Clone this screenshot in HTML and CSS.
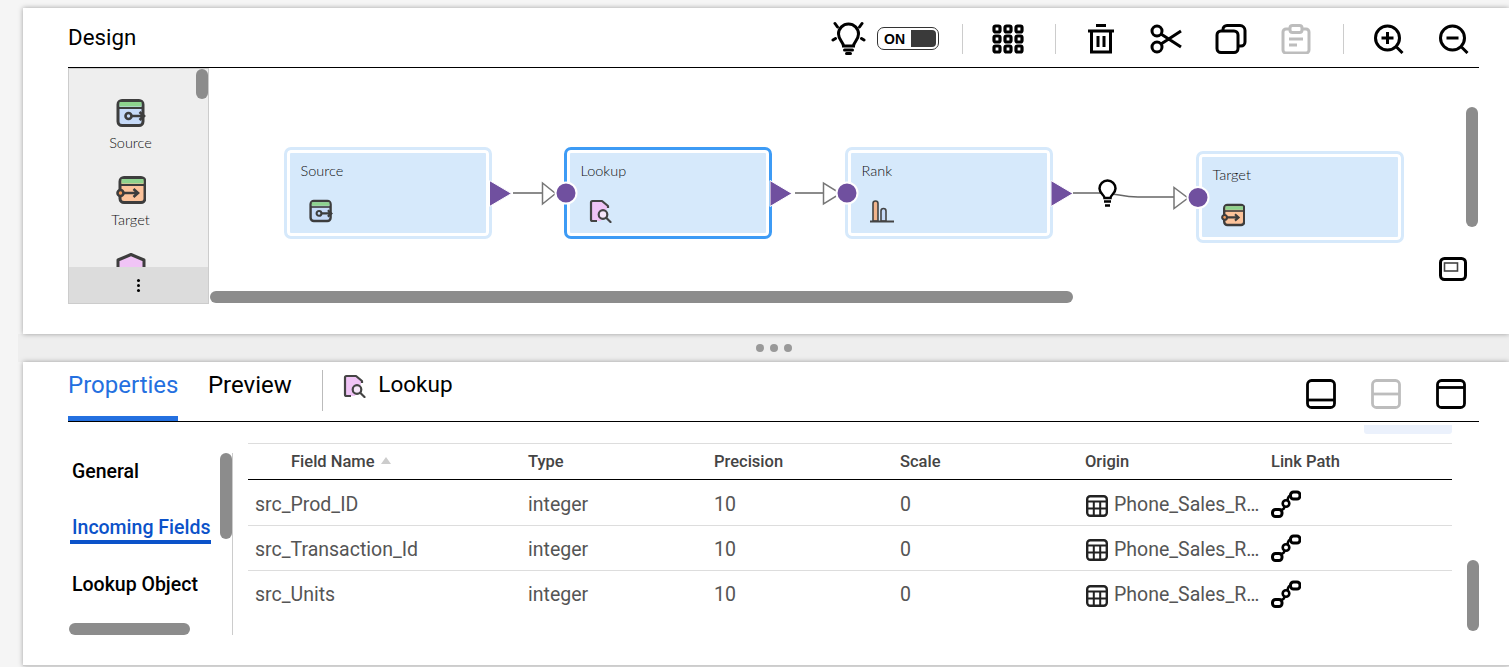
FILE: index.html
```html
<!DOCTYPE html>
<html lang="en">
<head>
    <meta charset="UTF-8">
    <meta name="viewport" content="width=device-width, initial-scale=1.0">
    <title>Design</title>
    <link rel="stylesheet" href="styles.css">
</head>
<body>
    <svg class="icon-defs" width="0" height="0" aria-hidden="true">
        <symbol id="i-source" viewBox="0 0 30 28">
            <rect x="2" y="1.500" width="25" height="25" rx="4" fill="#c6daf8" stroke="#3d3d3d" stroke-width="3"/>
            <rect x="3.500" y="3" width="22" height="4.500" fill="#8ed38e"/>
            <path d="M2 9h25" stroke="#3d3d3d" stroke-width="2"/>
            <circle cx="12.500" cy="17" r="3" fill="#c6daf8" stroke="#3d3d3d" stroke-width="2.600"/>
            <path d="M15.500 17H27M23.500 13l4.500 4-4.500 4" fill="none" stroke="#3d3d3d" stroke-width="2.600"/>
        </symbol>
        <symbol id="i-target" viewBox="0 0 30 28">
            <rect x="4" y="1.500" width="25" height="25" rx="4" fill="#fcc39b" stroke="#3d3d3d" stroke-width="3"/>
            <rect x="5.500" y="3" width="22" height="4.500" fill="#8ed38e"/>
            <path d="M4 9h25" stroke="#3d3d3d" stroke-width="2"/>
            <circle cx="4.500" cy="17" r="3" fill="#f59a58" stroke="#3d3d3d" stroke-width="2.600"/>
            <path d="M7.500 17H21M17.500 13l4.500 4-4.500 4" fill="none" stroke="#3d3d3d" stroke-width="2.600"/>
        </symbol>
        <symbol id="i-lookup" viewBox="0 0 24 24">
            <path d="M12 22H3.500a1.500 1.500 0 0 1-1.500-1.500v-17A1.500 1.500 0 0 1 3.500 2H12l6 5v3" fill="#f0c4f6"/>
            <path d="M8 22H3.500a1.500 1.500 0 0 1-1.500-1.500v-17A1.500 1.500 0 0 1 3.500 2H13l6 5v2" fill="none" stroke="#444" stroke-width="2.200" stroke-linejoin="round"/>
            <circle cx="14" cy="15.500" r="4.300" fill="#f6e6fa" stroke="#444" stroke-width="2.200"/>
            <path d="M17.200 18.800l4.300 4.200" stroke="#444" stroke-width="2.200" stroke-linecap="round"/>
        </symbol>
        <symbol id="i-rank" viewBox="0 0 24 24">
            <path d="M3 22V4.500a2.500 2.500 0 0 1 5 0V22z" fill="#f2b48c" stroke="#444" stroke-width="1.600"/>
            <path d="M11 22V12a2.500 2.500 0 0 1 5 0v10z" fill="#c6daf8" stroke="#444" stroke-width="1.600"/>
            <path d="M0 22.500h24" stroke="#444" stroke-width="2"/>
        </symbol>
        <symbol id="i-table" viewBox="0 0 22 22">
            <rect x="1.200" y="1.200" width="19.600" height="19.600" rx="3" fill="none" stroke="#222" stroke-width="2.400"/>
            <path d="M1 6.500h20M1 13.500h20M7.800 6.500V21M14.200 6.500V21" stroke="#222" stroke-width="2"/>
        </symbol>
        <symbol id="i-link" viewBox="0 0 30 28">
            <rect x="1.500" y="19.500" width="9.500" height="7" rx="3" fill="none" stroke="#000" stroke-width="3"/>
            <circle cx="15" cy="13.500" r="3.300" fill="none" stroke="#000" stroke-width="2.600"/>
            <rect x="19.500" y="2" width="9.500" height="7" rx="3" fill="none" stroke="#000" stroke-width="3"/>
            <path d="M9 20c3.500-.5 4-1 4.500-3.500M16.500 10.500C17 6.500 18 5.500 20.500 5" fill="none" stroke="#000" stroke-width="2.600"/>
        </symbol>
    </svg>

    <div class="page">
        <section class="panel design-panel">
            <header class="design-head">
                <h1 class="design-title">Design</h1>
                <div class="toolbar">
                    <div class="tool-group bulb-group">
                        <svg class="tool-icon bulb-icon" viewBox="0 0 34 34" fill="none" stroke="#000" stroke-width="3" stroke-linecap="round">
                            <path d="M12 25c0-4-5-6-5-12a10 10 0 0 1 20 0c0 6-5 8-5 12z"/>
                            <path d="M13 29h8M15 32.500h4" stroke-width="3"/>
                            <path d="M3.500 2.500l2.500 3.500M30.500 2.500L28 6M1.500 19l2.500-1.500M32.500 19L30 17.500"/>
                        </svg>
                        <div class="toggle"><span class="toggle-label">ON</span><span class="toggle-knob"></span></div>
                    </div>
                    <span class="tool-sep"></span>
                    <svg class="tool-icon" viewBox="0 0 32 30" fill="none" stroke="#000" stroke-width="3.200">
                        <rect x="2" y="2" width="6" height="6" rx="1.500"/><rect x="13" y="2" width="6" height="6" rx="1.500"/><rect x="24" y="2" width="6" height="6" rx="1.500"/>
                        <rect x="2" y="12" width="6" height="6" rx="1.500"/><rect x="13" y="12" width="6" height="6" rx="1.500"/><rect x="24" y="12" width="6" height="6" rx="1.500"/>
                        <rect x="2" y="22" width="6" height="6" rx="1.500"/><rect x="13" y="22" width="6" height="6" rx="1.500"/><rect x="24" y="22" width="6" height="6" rx="1.500"/>
                    </svg>
                    <span class="tool-sep"></span>
                    <svg class="tool-icon" viewBox="0 0 32 30" fill="none" stroke="#000" stroke-width="3">
                        <path d="M3 7h26M11 1.500h10M6.500 7v21h19V7M13 12v11M19 12v11"/>
                    </svg>
                    <svg class="tool-icon" viewBox="0 0 32 30" fill="none" stroke="#000" stroke-width="3">
                        <circle cx="7" cy="7" r="5"/><circle cx="7" cy="23" r="5"/>
                        <path d="M11 10l20 13M11 20L31 7"/>
                    </svg>
                    <svg class="tool-icon" viewBox="0 0 32 30" fill="none" stroke="#000" stroke-width="3">
                        <rect x="2" y="7" width="21" height="21.500" rx="4"/>
                        <path d="M8 7V5.500a4 4 0 0 1 4-4h13a5 5 0 0 1 5 5V18a4 4 0 0 1-4 4h-3"/>
                    </svg>
                    <svg class="tool-icon" viewBox="0 0 32 30" fill="none" stroke="#bdbdbd" stroke-width="3">
                        <path d="M10 5H6a3 3 0 0 0-3 3v18a3 3 0 0 0 3 3h20a3 3 0 0 0 3-3V8a3 3 0 0 0-3-3h-4"/>
                        <rect x="10" y="1.500" width="12" height="7" rx="2.500"/>
                        <path d="M9 15h14M9 21h8"/>
                    </svg>
                    <span class="tool-sep"></span>
                    <svg class="tool-icon" viewBox="0 0 32 30" fill="none" stroke="#000" stroke-width="3">
                        <circle cx="14.500" cy="14" r="12"/>
                        <path d="M14.500 8v12M8.500 14h12M23.500 23l6 6"/>
                    </svg>
                    <svg class="tool-icon" viewBox="0 0 32 30" fill="none" stroke="#000" stroke-width="3">
                        <circle cx="14.500" cy="14" r="12"/>
                        <path d="M8.500 14h12M23.500 23l6 6"/>
                    </svg>
                </div>
            </header>

            <div class="design-body">
                <aside class="palette">
                    <div class="palette-item">
                        <svg class="palette-icon"><use href="#i-source"/></svg>
                        <span class="palette-label">Source</span>
                    </div>
                    <div class="palette-item">
                        <svg class="palette-icon"><use href="#i-target"/></svg>
                        <span class="palette-label">Target</span>
                    </div>
                    <div class="palette-item">
                        <svg class="palette-icon" viewBox="0 0 30 28">
                            <path d="M15 1.500L28 7v19H2V7z" fill="#f0c4f6" stroke="#3d3d3d" stroke-width="3" stroke-linejoin="round"/>
                        </svg>
                    </div>
                    <div class="palette-more"><span class="kebab"></span></div>
                    <span class="scrollbar palette-scroll"></span>
                </aside>

                <div class="canvas">
                    <div class="node node-source">
                        <span class="node-name">Source</span>
                        <svg class="node-icon"><use href="#i-source"/></svg>
                    </div>
                    <div class="node node-lookup selected">
                        <span class="node-name">Lookup</span>
                        <svg class="node-icon"><use href="#i-lookup"/></svg>
                    </div>
                    <div class="node node-rank">
                        <span class="node-name">Rank</span>
                        <svg class="node-icon"><use href="#i-rank"/></svg>
                    </div>
                    <div class="node node-target">
                        <span class="node-name">Target</span>
                        <svg class="node-icon"><use href="#i-target"/></svg>
                    </div>

                    <svg class="links" viewBox="209 68 1270 236">
                        <g class="link-line">
                            <path d="M513 193h29M795 193h28M1073 193h25c20 0 22 4 40 4h36"/>
                            <path class="link-head" d="M542.500 183v21l13-10.500z"/>
                            <path class="link-head" d="M823.500 183v21l17-10.500z"/>
                            <path class="link-head" d="M1174 187.500v21l14-10.500z"/>
                        </g>
                        <g class="port-out">
                            <path d="M489.500 180.500l22 13-22 13z"/>
                            <path d="M770 180.500l22 13-22 13z"/>
                            <path d="M1051 180.500l22 13-22 13z"/>
                        </g>
                        <g class="port-in">
                            <circle cx="566" cy="193" r="10.500"/>
                            <circle cx="847" cy="193" r="10.500"/>
                            <circle cx="1198" cy="197.500" r="10.500"/>
                        </g>
                        <g class="link-bulb">
                            <path d="M1104.500 198c0-3-5-4.500-5-9.500a8 8 0 0 1 16 0c0 5-5 6.500-5 9.500z"/>
                            <path d="M1104 201.500h7M1105 205.500h5" stroke-width="2.600"/>
                        </g>
                    </svg>

                    <svg class="fit-icon" viewBox="0 0 28 24" fill="none" stroke="#000">
                        <rect x="1.500" y="1.500" width="25" height="21" rx="4" stroke-width="3"/>
                        <rect x="5.500" y="6" width="13" height="8" stroke-width="1.600" stroke="#444"/>
                    </svg>
                    <span class="scrollbar canvas-hscroll"></span>
                    <span class="scrollbar canvas-vscroll"></span>
                </div>
            </div>
        </section>

        <div class="splitter"><span></span><span></span><span></span></div>

        <section class="panel props-panel">
            <header class="props-head">
                <nav class="tabs">
                    <a class="tab active">Properties</a>
                    <a class="tab">Preview</a>
                </nav>
                <span class="tabs-sep"></span>
                <div class="selected-name">
                    <svg class="selected-icon"><use href="#i-lookup"/></svg>
                    <span>Lookup</span>
                </div>
                <div class="layout-btns">
                    <svg class="layout-icon" viewBox="0 0 30 30" fill="none" stroke="#000" stroke-width="2.800">
                        <rect x="1.500" y="1.500" width="27" height="27" rx="4"/><path d="M1.500 21h27"/>
                    </svg>
                    <svg class="layout-icon" viewBox="0 0 30 30" fill="none" stroke="#bdbdbd" stroke-width="2.800">
                        <rect x="1.500" y="1.500" width="27" height="27" rx="4"/><path d="M1.500 15h27"/>
                    </svg>
                    <svg class="layout-icon" viewBox="0 0 30 30" fill="none" stroke="#000" stroke-width="2.800">
                        <rect x="1.500" y="1.500" width="27" height="27" rx="4"/><path d="M1.500 8.500h27"/>
                    </svg>
                </div>
            </header>

            <div class="props-body">
                <aside class="side">
                    <ul class="side-list">
                        <li class="side-item">General</li>
                        <li class="side-item active">Incoming Fields</li>
                        <li class="side-item">Lookup Object</li>
                    </ul>
                    <span class="scrollbar side-vscroll"></span>
                    <span class="scrollbar side-hscroll"></span>
                </aside>

                <div class="fields">
                    <span class="fields-flag"></span>
                    <table class="fields-table">
                        <thead>
                            <tr>
                                <th class="col-name"><span class="sort-asc">Field Name</span></th>
                                <th class="col-type">Type</th>
                                <th class="col-prec">Precision</th>
                                <th class="col-scale">Scale</th>
                                <th class="col-origin">Origin</th>
                                <th>Link Path</th>
                            </tr>
                        </thead>
                        <tbody>
                            <tr>
                                <td class="field-name">src_Prod_ID</td>
                                <td>integer</td>
                                <td>10</td>
                                <td>0</td>
                                <td><div class="origin"><svg class="origin-icon"><use href="#i-table"/></svg>Phone_Sales_R…</div></td>
                                <td><svg class="link-icon"><use href="#i-link"/></svg></td>
                            </tr>
                            <tr>
                                <td class="field-name">src_Transaction_Id</td>
                                <td>integer</td>
                                <td>10</td>
                                <td>0</td>
                                <td><div class="origin"><svg class="origin-icon"><use href="#i-table"/></svg>Phone_Sales_R…</div></td>
                                <td><svg class="link-icon"><use href="#i-link"/></svg></td>
                            </tr>
                            <tr>
                                <td class="field-name">src_Units</td>
                                <td>integer</td>
                                <td>10</td>
                                <td>0</td>
                                <td><div class="origin"><svg class="origin-icon"><use href="#i-table"/></svg>Phone_Sales_R…</div></td>
                                <td><svg class="link-icon"><use href="#i-link"/></svg></td>
                            </tr>
                        </tbody>
                    </table>
                </div>
                <span class="scrollbar props-vscroll"></span>
            </div>
        </section>
    </div>
</body>
</html>
```

FILE: styles.css
```css
* {
    margin: 0;
    padding: 0;
    box-sizing: border-box;
}

html, body {
    height: 100%;
    overflow: hidden;
}

body {
    font-family: Roboto, Arial, sans-serif;
    background-color: #f5f5f5;
    color: #000;
}

.icon-defs {
    position: absolute;
}

.page {
    display: flex;
    flex-direction: column;
    width: 1509px;
    padding: 8px 0 0 23px;
}

.panel {
    background-color: #fff;
    box-shadow: 0 0 5px rgba(0, 0, 0, 0.35);
}

.scrollbar {
    position: absolute;
    background-color: #8c8c8c;
    border-radius: 6px;
}

/* design panel */
.design-panel {
    height: 326px;
    padding: 0 30px 0 45px;
}

.design-head {
    display: flex;
    justify-content: space-between;
    align-items: center;
    height: 60px;
    border-bottom: 1px solid #000;
}

.design-title {
    font-size: 22.300px;
    font-weight: 400;
    margin-bottom: 2px;
}

.toolbar {
    display: flex;
    align-items: center;
    gap: 33px;
    padding-right: 9px;
    margin-top: 2px;
}

.tool-icon {
    width: 32px;
    height: 30px;
    display: block;
}

.bulb-group {
    display: flex;
    align-items: center;
    gap: 11px;
    margin-right: -8px;
}

.bulb-icon {
    width: 35px;
    height: 34px;
    margin-top: -1px;
}

.toggle {
    display: flex;
    width: 62px;
    height: 23px;
    padding: 2px;
    border: 1px solid #333;
    border-radius: 7px;
    background-color: #fff;
}

.toggle-label {
    flex: 1;
    font-family: "Liberation Sans", Arial, sans-serif;
    font-size: 14px;
    font-weight: 700;
    line-height: 19px;
    padding-left: 4px;
}

.toggle-knob {
    width: 25px;
    background-color: #3a3a3a;
    border-radius: 0 4px 4px 0;
}

.tool-sep {
    width: 1px;
    height: 30px;
    background-color: #ccc;
    margin: 0 -4px 0 -2px;
}

.design-body {
    display: flex;
    height: 236px;
}

.palette {
    position: relative;
    width: 141px;
    border: 1px solid #ccc;
    background-color: #eee;
    overflow: hidden;
}

.palette-item {
    display: flex;
    flex-direction: column;
    align-items: center;
    height: 77px;
    padding-top: 30px;
    padding-right: 16px;
    gap: 8px;
}

.palette-icon {
    width: 30px;
    height: 28px;
    flex: none;
}

.palette-label {
    font-family: Lato, Arial, sans-serif;
    font-size: 14.500px;
    font-weight: 300;
    line-height: 16px;
    color: #111;
}

.palette-more {
    position: absolute;
    left: 0;
    right: 0;
    bottom: 0;
    height: 36px;
    background-color: #dcdcdc;
    display: flex;
    justify-content: center;
    align-items: center;
}

.kebab {
    width: 3px;
    height: 3px;
    border-radius: 50%;
    background-color: #000;
    box-shadow: 0 -5px 0 #000, 0 5px 0 #000;
}

.palette-scroll {
    left: 127px;
    top: 0;
    width: 12px;
    height: 30px;
}

.canvas {
    position: relative;
    flex: 1;
}

.node {
    position: absolute;
    width: 208px;
    height: 92px;
    padding: 13px 0 0 13.500px;
    border: 3px solid #d6e9fb;
    border-radius: 7px;
    background-color: #d6e9fb;
    box-shadow: inset 0 0 0 3px #fff;
}

.node.selected {
    border-color: #3d9bf5;
}

.node-source {
    left: 75px;
    top: 79px;
}

.node-lookup {
    left: 355px;
    top: 79px;
}

.node-rank {
    left: 636px;
    top: 79px;
}

.node-target {
    left: 987px;
    top: 83px;
}

.node-name {
    display: block;
    font-family: Lato, Arial, sans-serif;
    font-size: 14.500px;
    font-weight: 300;
    line-height: 16px;
    color: #111;
}

.node-icon {
    display: block;
    width: 24px;
    height: 24px;
    margin: 20px 0 0 8px;
}

.links {
    position: absolute;
    left: 0;
    top: 0;
    width: 1270px;
    height: 236px;
    pointer-events: none;
}

.link-line {
    fill: none;
    stroke: #666;
    stroke-width: 1.500;
}

.link-head {
    fill: #fff;
    stroke: #777;
}

.port-out path {
    fill: #70509f;
    stroke: #fff;
    stroke-width: 1;
}

.port-in circle {
    fill: #70509f;
    stroke: #fff;
    stroke-width: 2;
}

.link-bulb {
    fill: #fff;
    stroke: #000;
    stroke-width: 2.500;
}

.fit-icon {
    position: absolute;
    left: 1230px;
    top: 189px;
    width: 28px;
    height: 24px;
}

.canvas-hscroll {
    left: 1px;
    bottom: 1px;
    width: 863px;
    height: 12px;
}

.canvas-vscroll {
    left: 1257px;
    top: 39px;
    width: 12px;
    height: 120px;
}

/* splitter between the panels */
.splitter {
    display: flex;
    justify-content: center;
    align-items: center;
    gap: 6px;
    height: 28px;
    margin-left: -5px;
    padding-left: 20px;
    background-color: #eee;
    z-index: -1;
}

.splitter span {
    width: 8px;
    height: 8px;
    border-radius: 50%;
    background-color: #999;
}

/* properties panel */
.props-panel {
    height: 304px;
    padding: 0 30px 0 45px;
    border-bottom: 1px solid #ccc;
}

.props-head {
    display: flex;
    align-items: flex-start;
    height: 60px;
    border-bottom: 1px solid #000;
}

.tabs {
    display: flex;
    gap: 29.500px;
}

.tab {
    height: 59px;
    padding-top: 8px;
    font-size: 24px;
    line-height: 30px;
}

.tab.active {
    color: #2470e0;
    border-bottom: 5px solid #2470e0;
}

.tabs-sep {
    width: 1px;
    height: 41px;
    margin: 8px 20px 0 30.500px;
    background-color: #bbb;
}

.selected-name {
    display: flex;
    align-items: center;
    gap: 11px;
    height: 30px;
    margin-top: 7px;
    font-size: 22.500px;
}

.selected-icon {
    width: 24px;
    height: 24px;
    margin-top: 3px;
}

.layout-btns {
    display: flex;
    gap: 35px;
    margin: 17px 13px 0 auto;
}

.layout-icon {
    width: 30px;
    height: 30px;
    display: block;
}

.props-body {
    position: relative;
    display: flex;
}

.side {
    position: relative;
    width: 165px;
    height: 182px;
    margin-top: 31px;
    border-right: 1px solid #ccc;
}

.side-list {
    list-style: none;
    padding: 7px 0 0 4px;
}

.side-item {
    width: fit-content;
    height: 24px;
    margin-bottom: 32px;
    font-size: 19.500px;
    font-weight: 500;
    line-height: 24px;
}

.side-item.active {
    box-sizing: content-box;
    height: 23px;
    padding: 0 1px 1px 2px;
    margin: 0 0 28.500px -2px;
    border-bottom: 4px solid #0b52c9;
    color: #0b52c9;
}

.side-vscroll {
    left: 152px;
    top: 0;
    width: 12px;
    height: 86px;
}

.side-hscroll {
    left: 1px;
    bottom: 0;
    width: 121px;
    height: 12px;
}

.fields {
    position: relative;
    width: 1204px;
    margin: 21px 0 0 15px;
}

.fields-flag {
    position: absolute;
    right: 0;
    top: -18px;
    width: 88px;
    height: 9px;
    background-color: #ebf1fc;
    border-radius: 0 0 3px 3px;
}

.fields-table {
    width: 100%;
    table-layout: fixed;
    border-collapse: collapse;
    border-top: 1px solid #ddd;
}

.fields-table th {
    height: 36px;
    border-bottom: 1px solid #000;
    text-align: left;
    font-size: 16.500px;
    font-weight: 500;
    color: #444;
}

.col-name {
    width: 280px;
    padding-left: 43px;
}

.col-type,
.col-prec,
.col-origin {
    width: 186px;
}

.col-scale {
    width: 185px;
}

.sort-asc::after {
    content: "";
    display: inline-block;
    margin-left: 6px;
    vertical-align: 3px;
    border-left: 5.500px solid transparent;
    border-right: 5.500px solid transparent;
    border-bottom: 7px solid #ccc;
}

.fields-table td {
    height: 45.500px;
    padding-top: 3px;
    border-bottom: 1px solid #ddd;
    font-size: 19.500px;
    color: #555;
}

.fields-table tr:first-child td {
    padding-top: 5px;
}

.fields-table tr:last-child td {
    padding-top: 2px;
    border-bottom: none;
}

.fields-table .field-name {
    padding-left: 7px;
}

.origin {
    display: flex;
    align-items: center;
    gap: 6px;
    white-space: nowrap;
}

.origin-icon {
    width: 22px;
    height: 22px;
    flex: none;
    margin: 2px 0 0 1px;
}

.link-icon {
    display: block;
    width: 30px;
    height: 28px;
    margin-top: -2px;
}

.props-vscroll {
    right: 0;
    top: 138px;
    width: 12px;
    height: 71px;
}
```
